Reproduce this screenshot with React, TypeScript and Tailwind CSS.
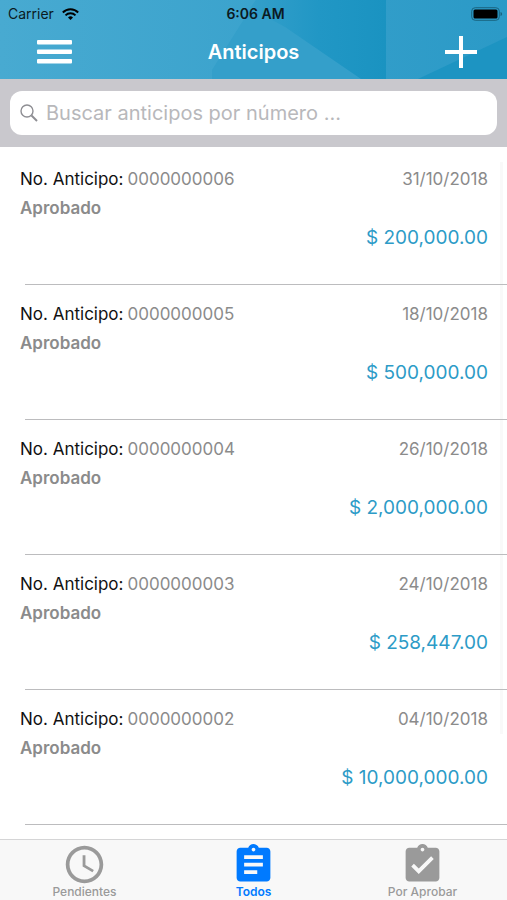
import { useState } from 'react'
import { MdAccessTime, MdAssignment, MdAssignmentTurnedIn } from 'react-icons/md'

const anticipos = [
  { numero: '0000000006', fecha: '31/10/2018', estado: 'Aprobado', monto: '$ 200,000.00' },
  { numero: '0000000005', fecha: '18/10/2018', estado: 'Aprobado', monto: '$ 500,000.00' },
  { numero: '0000000004', fecha: '26/10/2018', estado: 'Aprobado', monto: '$ 2,000,000.00' },
  { numero: '0000000003', fecha: '24/10/2018', estado: 'Aprobado', monto: '$ 258,447.00' },
  { numero: '0000000002', fecha: '04/10/2018', estado: 'Aprobado', monto: '$ 10,000,000.00' }
]

const tabs = [
  { label: 'Pendientes', icon: MdAccessTime },
  { label: 'Todos', icon: MdAssignment },
  { label: 'Por Aprobar', icon: MdAssignmentTurnedIn }
]

function HeaderBackground() {
  return (
    <svg
      className="absolute inset-0 h-full w-full"
      viewBox="0 0 507 79"
      preserveAspectRatio="none"
      aria-hidden="true"
    >
      <defs>
        <linearGradient id="base" x1="0" y1="0" x2="1" y2="0">
          <stop offset="0" stopColor="#48aad1" />
          <stop offset="0.5" stopColor="#3ba3cd" />
          <stop offset="0.75" stopColor="#319dc9" />
          <stop offset="1" stopColor="#2b9ac7" />
        </linearGradient>
        <linearGradient id="facet" gradientUnits="userSpaceOnUse" x1="250" y1="0" x2="386" y2="0">
          <stop offset="0" stopColor="#349fca" />
          <stop offset="0.5" stopColor="#2197c5" />
          <stop offset="1" stopColor="#1a93c1" />
        </linearGradient>
      </defs>
      <rect width="507" height="79" fill="url(#base)" />
      <polygon points="256,0 386,0 386,79 212,79 212,70" fill="#349fca" />
      <polygon points="256,0 386,0 386,79 361,79 285,27 250,8" fill="url(#facet)" />
      <polygon points="507,37 507,79 418,79" fill="#1d94c2" />
    </svg>
  )
}

function StatusBar() {
  return (
    <div className="relative grid h-7 grid-cols-3 items-center pl-2 pr-1 text-sm text-[#0b1a22]">
      <div className="flex items-center gap-2">
        <span>Carrier</span>
        <svg className="h-3 w-[17px]" viewBox="0 0 17 12" fill="none" stroke="#000" strokeWidth="1.9" aria-hidden="true">
          <path d="M0.8 4.500a10.800 10.800 0 0 1 15.400 0" />
          <path d="M3.500 7.300a7 7 0 0 1 10 0" />
          <path d="M8.500 12 6 9.500a3.500 3.500 0 0 1 5 0z" fill="#000" stroke="none" />
        </svg>
      </div>
      <span className="text-center font-semibold">6:06 AM</span>
      <svg className="h-[14px] w-8 justify-self-end" viewBox="0 0 32 14" aria-hidden="true">
        <rect x="0.7" y="0.7" width="27.6" height="12.6" rx="3.5" fill="none" stroke="#1a6480" strokeWidth="1" />
        <rect x="2.5" y="2.5" width="24" height="9" rx="1.5" fill="#000" />
        <path d="M29.5 5v4c1-.3 1.6-1 1.6-2s-.6-1.700-1.600-2z" fill="#1a6480" />
      </svg>
    </div>
  )
}

export default function App() {
  const [active, setActive] = useState('Todos')
  const [query, setQuery] = useState('')

  const visible = anticipos.filter((item) => item.numero.includes(query.trim()))

  return (
    <div className="flex min-h-screen flex-col bg-white font-['Inter','Liberation_Sans',sans-serif]">
      {/* Header */}
      <header className="relative">
        <HeaderBackground />
        <StatusBar />
        <div className="relative grid h-[51px] grid-cols-3 items-center px-[30px] pb-1">
          <button aria-label="Menú" className="ml-1.5 justify-self-start">
            <svg className="h-6 w-9" viewBox="0 0 36 24" fill="#fff" aria-hidden="true">
              <rect x="1" y="0" width="35" height="4.500" rx="1" />
              <rect x="1" y="9.500" width="35" height="4.500" rx="1" />
              <rect x="1" y="19" width="35" height="4.500" rx="1" />
            </svg>
          </button>
          <h1 className="text-center text-xl font-semibold text-white">Anticipos</h1>
          <button aria-label="Agregar anticipo" className="justify-self-end">
            <svg className="h-8 w-8" viewBox="0 0 32 32" fill="#fff" aria-hidden="true">
              <rect x="0" y="14" width="32" height="4" />
              <rect x="14" y="0" width="4" height="32" />
            </svg>
          </button>
        </div>
      </header>

      {/* Search */}
      <div className="bg-[#c9c8cd] px-[10px] py-3">
        <label className="flex h-11 items-center gap-2 rounded-xl bg-white px-[10px]">
          <svg className="h-[18px] w-[18px] shrink-0" viewBox="0 0 18 18" fill="none" stroke="#8e8e93" aria-hidden="true">
            <circle cx="7" cy="7" r="6" strokeWidth="1.4" />
            <path d="m11.500 11.500 5.500 5.500" strokeWidth="2" />
          </svg>
          <input
            type="text"
            aria-label="Buscar anticipos"
            value={query}
            onChange={(e) => setQuery(e.target.value)}
            placeholder="Buscar anticipos por número ..."
            className="min-w-0 flex-1 bg-transparent text-xl text-gray-900 outline-none placeholder:text-[#b8b8bb]"
          />
        </label>
      </div>

      {/* List */}
      <main className="relative flex-1 pb-[14px] pt-[3px]">
        <div className="absolute bottom-[105px] right-1 top-[15px] w-[3px] bg-[#f9f9f9]" />
        <ul className="relative">
          {visible.map((item) => (
            <li key={item.numero} className="pl-5">
              <div className="flex h-[134px] flex-col pr-[19px] pt-4">
                <div className="flex h-7 items-center justify-between text-[17px]">
                  <p>
                    <span className="mr-1 text-[#111111]">No. Anticipo:</span>
                    <span className="text-[#8b8b8b]">{item.numero}</span>
                  </p>
                  <time className="text-[#8b8b8b]">{item.fecha}</time>
                </div>
                <p className="h-7 text-[17px] font-semibold leading-7 text-[#8b8b8b]">{item.estado}</p>
                <p className="text-right text-[19px] leading-8 text-[#2d9bc7]">{item.monto}</p>
              </div>
              <div className="ml-[5px] h-px bg-[#bcbcbe]" />
            </li>
          ))}
        </ul>
      </main>

      {/* Tab bar */}
      <nav className="sticky bottom-0 grid h-[61px] grid-cols-3 border-t border-[#d5d5d6] bg-[#f8f8f8]">
        {tabs.map((tab) => (
          <button
            key={tab.label}
            onClick={() => setActive(tab.label)}
            className={`flex flex-col items-center justify-start pt-[2px] text-xs ${
              active === tab.label ? 'font-semibold text-[#007aff]' : 'font-medium text-[#9a9a9a]'
            }`}
          >
            <tab.icon className="h-[45px] w-[45px] shrink-0" />
            <span className="-mt-[3px] leading-4">{tab.label}</span>
          </button>
        ))}
      </nav>
    </div>
  )
}
